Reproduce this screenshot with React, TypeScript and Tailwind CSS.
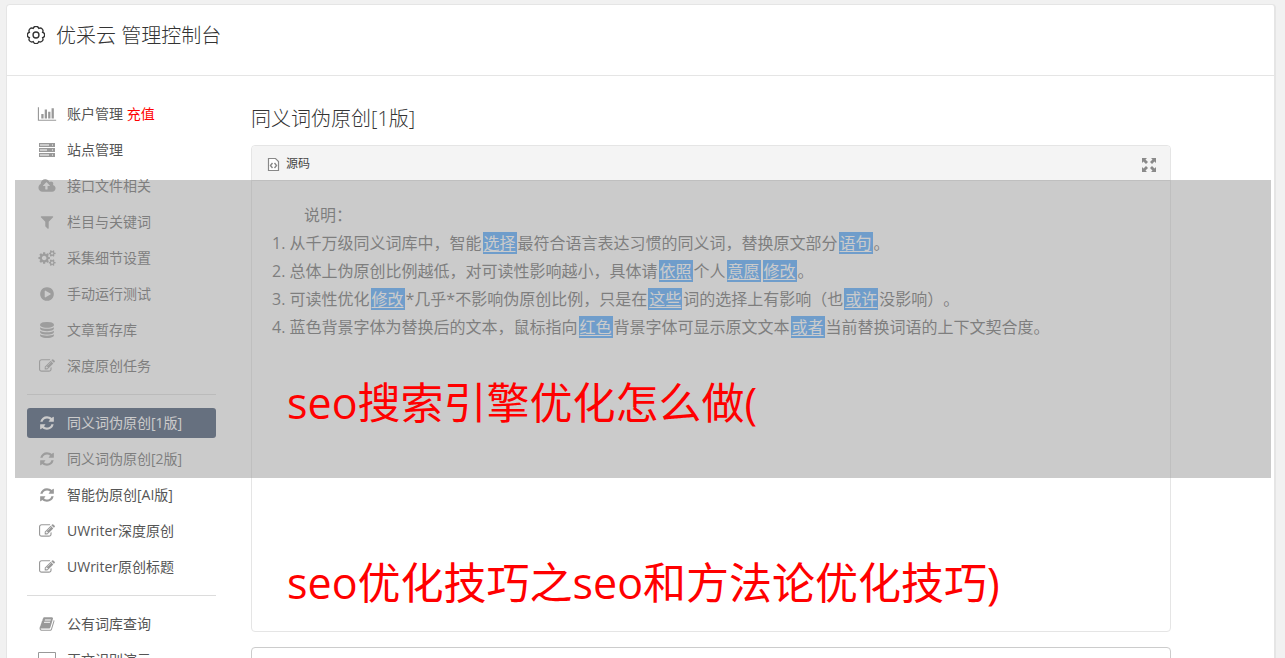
import React from 'react';

const ICONS = {
  chart: {
    box: '0 0 2048 1792',
    d: 'M640 896v512h-256v-512h256zm384-512v1024h-256v-1024h256zm1024 1152v128h-2048v-1536h128v1408h1920zm-640-896v768h-256v-768h256zm384-384v1152h-256v-1152h256z',
  },
  server: {
    box: '0 0 18 16',
    d: 'M1 1h16v4H1zM2 2.500v1h9v-1zM14 2.500v1h1v-1zM1 6h16v4H1zM2 7.500v1h7v-1zM14 7.500v1h1v-1zM1 11h16v4H1zM2 12.500v1h9v-1zM14 12.500v1h1v-1z',
  },
  cloud: {
    box: '-64 0 1920 1792',
    d: 'M1216 864q0-14-9-23l-352-352q-9-9-23-9t-23 9l-351 351q-10 12-10 24 0 14 9 23t23 9h224v352q0 13 9.5 22.5t22.5 9.5h192q13 0 22.5-9.5t9.5-22.5v-352h224q13 0 22.5-9.5t9.5-22.5zm640 288q0 159-112.5 271.5t-271.5 112.5h-1088q-185 0-316.5-131.5t-131.5-316.5q0-130 70-240t188-165q-2-30-2-43 0-212 150-362t362-150q156 0 285.5 87t188.5 231q71-62 166-62 106 0 181 75t75 181q0 76-41 138 130 31 213.5 135.5t83.5 238.5z',
  },
  filter: {
    box: '0 0 1792 1792',
    d: 'M1595 295q17 41-14 70l-493 493v742q0 42-39 59-13 5-25 5-27 0-45-19l-256-256q-19-19-19-45v-486l-493-493q-31-29-14-70 17-39 59-39h1280q42 0 59 39z',
  },
  play: {
    box: '0 0 1792 1792',
    d: 'M896 128q209 0 385.5 103t279.5 279.5 103 385.5-103 385.5-279.5 279.5-385.5 103-385.5-103-279.5-279.5-103-385.5 103-385.5 279.5-279.5 385.5-103zm384 823q32-18 32-55t-32-55l-544-320q-31-19-64-1-32 19-32 56v640q0 37 32 56 16 8 32 8 17 0 32-9z',
  },
  database: {
    box: '0 0 1792 1792',
    d: 'M896 768q237 0 443-43t325-127v170q0 69-103 128t-280 93.5-385 34.5-385-34.5-280-93.5-103-128v-170q119 84 325 127t443 43zm0 768q237 0 443-43t325-127v170q0 69-103 128t-280 93.5-385 34.5-385-34.5-280-93.5-103-128v-170q119 84 325 127t443 43zm0-384q237 0 443-43t325-127v170q0 69-103 128t-280 93.5-385 34.5-385-34.5-280-93.5-103-128v-170q119 84 325 127t443 43zm0-1152q208 0 385 34.5t280 93.5 103 128v128q0 69-103 128t-280 93.5-385 34.5-385-34.5-280-93.5-103-128v-128q0-69 103-128t280-93.5 385-34.5z',
  },
  edit: {
    box: '0 0 1792 1792',
    d: 'M888 1184l116-116-152-152-116 116v56h96v96h56zm440-720q-16-16-33 1l-350 350q-17 17-1 33t33-1l350-350q17-17 1-33zm80 594v190q0 119-84.5 203.5t-203.5 84.5h-832q-119 0-203.5-84.5t-84.5-203.5v-832q0-119 84.5-203.5t203.5-84.5h832q63 0 117 25 15 7 18 23 3 17-9 29l-49 49q-14 14-32 8-23-6-45-6h-832q-66 0-113 47t-47 113v832q0 66 47 113t113 47h832q66 0 113-47t47-113v-126q0-13 9-22l64-64q15-15 35-7t20 29zm-96-738l288 288-672 672h-288v-288zm444 132l-92 92-288-288 92-92q28-28 68-28t68 28l152 152q28 28 28 68t-28 68z',
  },
  refresh: {
    box: '0 0 1792 1792',
    d: 'M1639 1056q0 5-1 7-64 268-268 434.5t-478 166.5q-146 0-282.5-55t-243.5-157l-129 129q-19 19-45 19t-45-19-19-45v-448q0-26 19-45t45-19h448q26 0 45 19t19 45-19 45l-137 137q71 66 161 102t187 36q134 0 250-65t186-179q11-17 53-117 8-23 30-23h192q13 0 22.5 9.5t9.5 22.5zm25-800v448q0 26-19 45t-45 19h-448q-26 0-45-19t-19-45 19-45l138-138q-148-137-349-137-134 0-250 65t-186 179q-11 17-53 117-8 23-30 23h-199q-13 0-22.5-9.5t-9.5-22.5v-7q65-268 270-434.5t480-166.5q146 0 284 55.5t245 156.5l130-129q19-19 45-19t45 19 19 45z',
  },
  book: {
    box: '0 0 1792 1792',
    d: 'M1703 478q40 57 18 129l-275 906q-19 64-76.5 107.5t-122.5 43.5h-923q-77 0-148.5-53.5t-99.5-131.5q-24-67-2-127 0-4 3-27t4-37q1-8-3-21.5t-3-19.5q2-11 8-21t16.5-23.5 16.5-23.5q23-38 45-91.5t30-91.5q3-10 .5-30t-.5-28q3-11 17-28t17-23q21-36 42-92t25-90q1-9-2.5-32t.5-28q4-13 22-30.5t22-22.5q19-26 42.5-84.5t27.5-96.5q1-8-3-25.5t-2-26.5q2-8 9-18t18-23 17-21q8-12 16.5-30.5t15-35 16-36 19.5-32 26.5-23.5 36-11.5 47.5 5.5l-1 3q38-9 51-9h761q74 0 114 56t18 130l-274 906q-36 119-71.5 153.5t-128.5 34.5h-869q-27 0-38 15-11 16-1 43 24 70 144 70h923q29 0 56-15.5t35-41.5l300-987q7-22 5-57 38 15 59 43zm-1064 2q-4 13 2 22.5t20 9.5h608q13 0 25.5-9.5t16.5-22.5l21-64q4-13-2-22.5t-20-9.5h-608q-13 0-25.5 9.5t-16.5 22.5zm-83 256q-4 13 2 22.5t20 9.5h608q13 0 25.5-9.5t16.5-22.5l21-64q4-13-2-22.5t-20-9.5h-608q-13 0-25.5 9.5t-16.5 22.5z',
  },
  cogs: {
    box: '0 0 1920 1792',
    d: 'M896 896q0-106-75-181t-181-75-181 75-75 181 75 181 181 75 181-75 75-181zm768 512q0-52-38-90t-90-38-90 38-38 90q0 53 37.500 90.500t90.500 37.500 90.500-37.500 37.500-90.500zm0-1024q0-52-38-90t-90-38-90 38-38 90q0 53 37.500 90.500t90.500 37.500 90.500-37.500 37.500-90.500zm-384 421v185q0 10-7 19.500t-16 10.500l-155 24q-11 35-32 76 34 48 90 115 7 11 7 20 0 12-7 19-23 30-82.500 89.500t-78.500 59.500q-11 0-21-7l-115-90q-37 19-77 31-11 108-23 155-7 24-30 24h-186q-11 0-20-7.500t-10-17.500l-23-153q-34-10-75-31l-118 89q-7 7-20 7-11 0-21-8-144-133-144-160 0-9 7-19 10-14 41-53t47-61q-23-44-35-82l-152-24q-10-1-17-9.500t-7-19.500v-185q0-10 7-19.500t16-10.500l155-24q11-35 32-76-34-48-90-115-7-11-7-20 0-12 7-20 22-30 82-89t79-59q11 0 21 7l115 90q34-18 77-32 11-108 23-154 7-24 30-24h186q11 0 20 7.500t10 17.500l23 153q34 10 75 31l118-89q8-7 20-7 11 0 21 8 144 133 144 160 0 8-7 19-12 16-42 54t-45 60q23 48 34 82l152 23q10 2 17 10.500t7 19.500zm640 533v140q0 16-149 31-12 27-30 52 51 113 51 138 0 4-4 7-122 71-124 71-8 0-46-47t-52-68q-20 2-30 2t-30-2q-14 21-52 68t-46 47q-2 0-124-71-4-3-4-7 0-25 51-138-18-25-30-52-149-15-149-31v-140q0-16 149-31 13-29 30-52-51-113-51-138 0-4 4-7 4-2 35-20t59-34 30-16q8 0 46 46.500t52 67.500q20-2 30-2t30 2q51-71 92-112l6-2q4 0 124 70 4 3 4 7 0 25-51 138 17 23 30 52 149 15 149 31zm0-1024v140q0 16-149 31-12 27-30 52 51 113 51 138 0 4-4 7-122 71-124 71-8 0-46-47t-52-68q-20 2-30 2t-30-2q-14 21-52 68t-46 47q-2 0-124-71-4-3-4-7 0-25 51-138-18-25-30-52-149-15-149-31v-140q0-16 149-31 13-29 30-52-51-113-51-138 0-4 4-7 4-2 35-20t59-34 30-16q8 0 46 46.500t52 67.500q20-2 30-2t30 2q51-71 92-112l6-2q4 0 124 70 4 3 4 7 0 25-51 138 17 23 30 52 149 15 149 31z',
  },
  desktop: {
    box: '0 0 18 16',
    d: 'M1 0h16q1 0 1 1v10q0 1-1 1h-6v2h2v1H5v-1h2v-2H1q-1 0-1-1V1q0-1 1-1zM1 1v9h16V1z',
  },
};

interface NavItem {
  icon: keyof typeof ICONS;
  label: string;
  extra?: string;
  active?: boolean;
}

const groups: NavItem[][] = [
  [
    { icon: 'chart', label: '账户管理', extra: '充值' },
    { icon: 'server', label: '站点管理' },
    { icon: 'cloud', label: '接口文件相关' },
    { icon: 'filter', label: '栏目与关键词' },
    { icon: 'cogs', label: '采集细节设置' },
    { icon: 'play', label: '手动运行测试' },
    { icon: 'database', label: '文章暂存库' },
    { icon: 'edit', label: '深度原创任务' },
  ],
  [
    { icon: 'refresh', label: '同义词伪原创[1版]', active: true },
    { icon: 'refresh', label: '同义词伪原创[2版]' },
    { icon: 'refresh', label: '智能伪原创[AI版]' },
    { icon: 'edit', label: 'UWriter深度原创' },
    { icon: 'edit', label: 'UWriter原创标题' },
  ],
  [
    { icon: 'book', label: '公有词库查询' },
    { icon: 'desktop', label: '正文识别演示' },
  ],
];

const Icon = ({ name }: { name: keyof typeof ICONS }) => (
  <svg viewBox={ICONS[name].box} className="h-4 w-5 shrink-0" fill="currentColor" fillRule="evenodd" aria-hidden="true">
    <path d={ICONS[name].d} />
  </svg>
);

const Word = ({ children }: { children: React.ReactNode }) => (
  <a href="#" className="mx-px bg-[#3399ff] px-px text-white underline underline-offset-2">
    {children}
  </a>
);

const Sidebar = () => (
  <nav className="w-[189px] shrink-0 text-sm">
    {groups.map((group, i) => (
      <ul
        key={i}
        className={`flex flex-col gap-1.5 ${i > 0 ? 'mt-[13px] border-t border-[#dcdcdc] pt-[13px]' : ''}`}
      >
        {group.map((item) => (
          <li key={item.label}>
            <a
              href="#"
              className={`flex h-[30px] items-center gap-2.5 rounded-[3px] pl-2.5 whitespace-nowrap ${item.active ? 'bg-[#213557] text-white' : 'text-[#555]'}`}
            >
              <span className={item.active ? 'text-white' : 'text-[#999]'}>
                <Icon name={item.icon} />
              </span>
              <span>
                {item.label}
                {item.extra && <span className="text-[#f00]"> {item.extra}</span>}
              </span>
            </a>
          </li>
        ))}
      </ul>
    ))}
  </nav>
);

const Editor = () => (
  <section className="h-[487px] rounded border border-[#e5e5e5]">
    <div className="flex h-[35px] items-center justify-between rounded-t border-b border-[#e5e5e5] bg-[#f4f4f4] px-[15px] pt-px">
      <button type="button" className="flex items-center gap-1.5 text-xs text-[#444]">
        <svg viewBox="0 0 13 16" className="h-4 w-[13px]" fill="none" stroke="#888" aria-hidden="true">
          <path d="M1.500 2.500h7l3 3v9h-10z" fill="#fff" strokeWidth="1.200" />
          <path d="M5.500 7l-2 2.500 2 2.500M7.500 7l2 2.500-2 2.500" strokeWidth="1.400" />
        </svg>
        源码
      </button>
      <button type="button" aria-label="全屏" className="-mr-1">
        <svg viewBox="0 0 14 14" className="mt-0.5 mr-[3px] size-3.5" fill="#8a8a8a" aria-hidden="true">
          <path d="M0 0h5L3.500 1.500 6 4 4 6 1.500 3.500 0 5zM14 0v5l-1.500-1.500L10 6 8 4l2.500-2.500L9 0zM0 14V9l1.500 1.500L4 8l2 2-2.500 2.500L5 14zM14 14H9l1.500-1.500L8 10l2-2 2.500 2.500L14 9z" />
        </svg>
      </button>
    </div>
    <div className="px-5 py-5 text-base leading-7 text-[#555] [text-spacing-trim:space-all]">
      <p className="pl-8">说明：</p>
      <p>
        1. 从千万级同义词库中，智能<Word>选择</Word>最符合语言表达习惯的同义词，替换原文部分<Word>语句</Word>。
      </p>
      <p>
        2. 总体上伪原创比例越低，对可读性影响越小，具体请<Word>依照</Word>个人<Word>意愿</Word><Word>修改</Word>。
      </p>
      <p>
        3. 可读性优化<Word>修改</Word>*几乎*不影响伪原创比例，只是在<Word>这些</Word>词的选择上有影响（也<Word>或许</Word>没影响）。
      </p>
      <p>
        4. 蓝色背景字体为替换后的文本，鼠标指向<Word>红色</Word>背景字体可显示原文文本<Word>或者</Word>当前替换词语的上下文契合度。
      </p>
    </div>
  </section>
);

export default function App() {
  return (
    <div
      lang="zh-CN"
      className="relative h-screen overflow-hidden bg-[#f1f1f1] px-1.5 pt-1 font-['Open_Sans','Noto_Sans_CJK_SC',sans-serif]"
    >
      <div className="mr-[3px] rounded border border-r-2 border-[#e5e5e5] bg-white">
        <header className="flex h-[71px] items-start gap-[11px] border-b border-[#e5e5e5] px-5 pt-[17px] text-[#333]">
          <svg viewBox="-10 -10 20 20" className="mt-1 size-[18px]" fill="none" stroke="currentColor" strokeWidth="1.500" aria-hidden="true">
            <path d="M-3.060-7.390A3.200 3.200 0 0 1 3.060-7.390A3.200 3.200 0 0 1 7.390-3.060A3.200 3.200 0 0 1 7.390 3.060A3.200 3.200 0 0 1 3.060 7.390A3.200 3.200 0 0 1-3.060 7.390A3.200 3.200 0 0 1-7.390 3.060A3.200 3.200 0 0 1-7.390-3.060A3.200 3.200 0 0 1-3.060-7.390z" />
            <circle r="3.300" />
          </svg>
          <h1 className="text-xl leading-7 font-light">优采云 管理控制台</h1>
        </header>
        <div className="flex gap-[35px] pt-[23px] pr-[103px] pl-5">
          <Sidebar />
          <main className="min-w-0 flex-1 pt-1.5">
            <h2 className="mb-3 text-xl leading-7 font-light text-[#333]">同义词伪原创[1版]</h2>
            <Editor />
            <textarea
              aria-label="原文"
              className="mt-[15px] block h-40 w-full resize-none rounded border border-[#ccc] bg-white"
            />
          </main>
        </div>
      </div>
      <div className="pointer-events-none absolute top-[180px] right-[14px] left-[15px] h-[298px] bg-[#a0a0a0]/55" />
      <div className="pointer-events-none absolute top-[373px] left-[287px] flex flex-col gap-[120px] text-[43px] leading-[60px] whitespace-nowrap text-[#f00]">
        <p>seo搜索引擎优化怎么做(</p>
        <p>seo优化技巧之seo和方法论优化技巧)</p>
      </div>
    </div>
  );
}
